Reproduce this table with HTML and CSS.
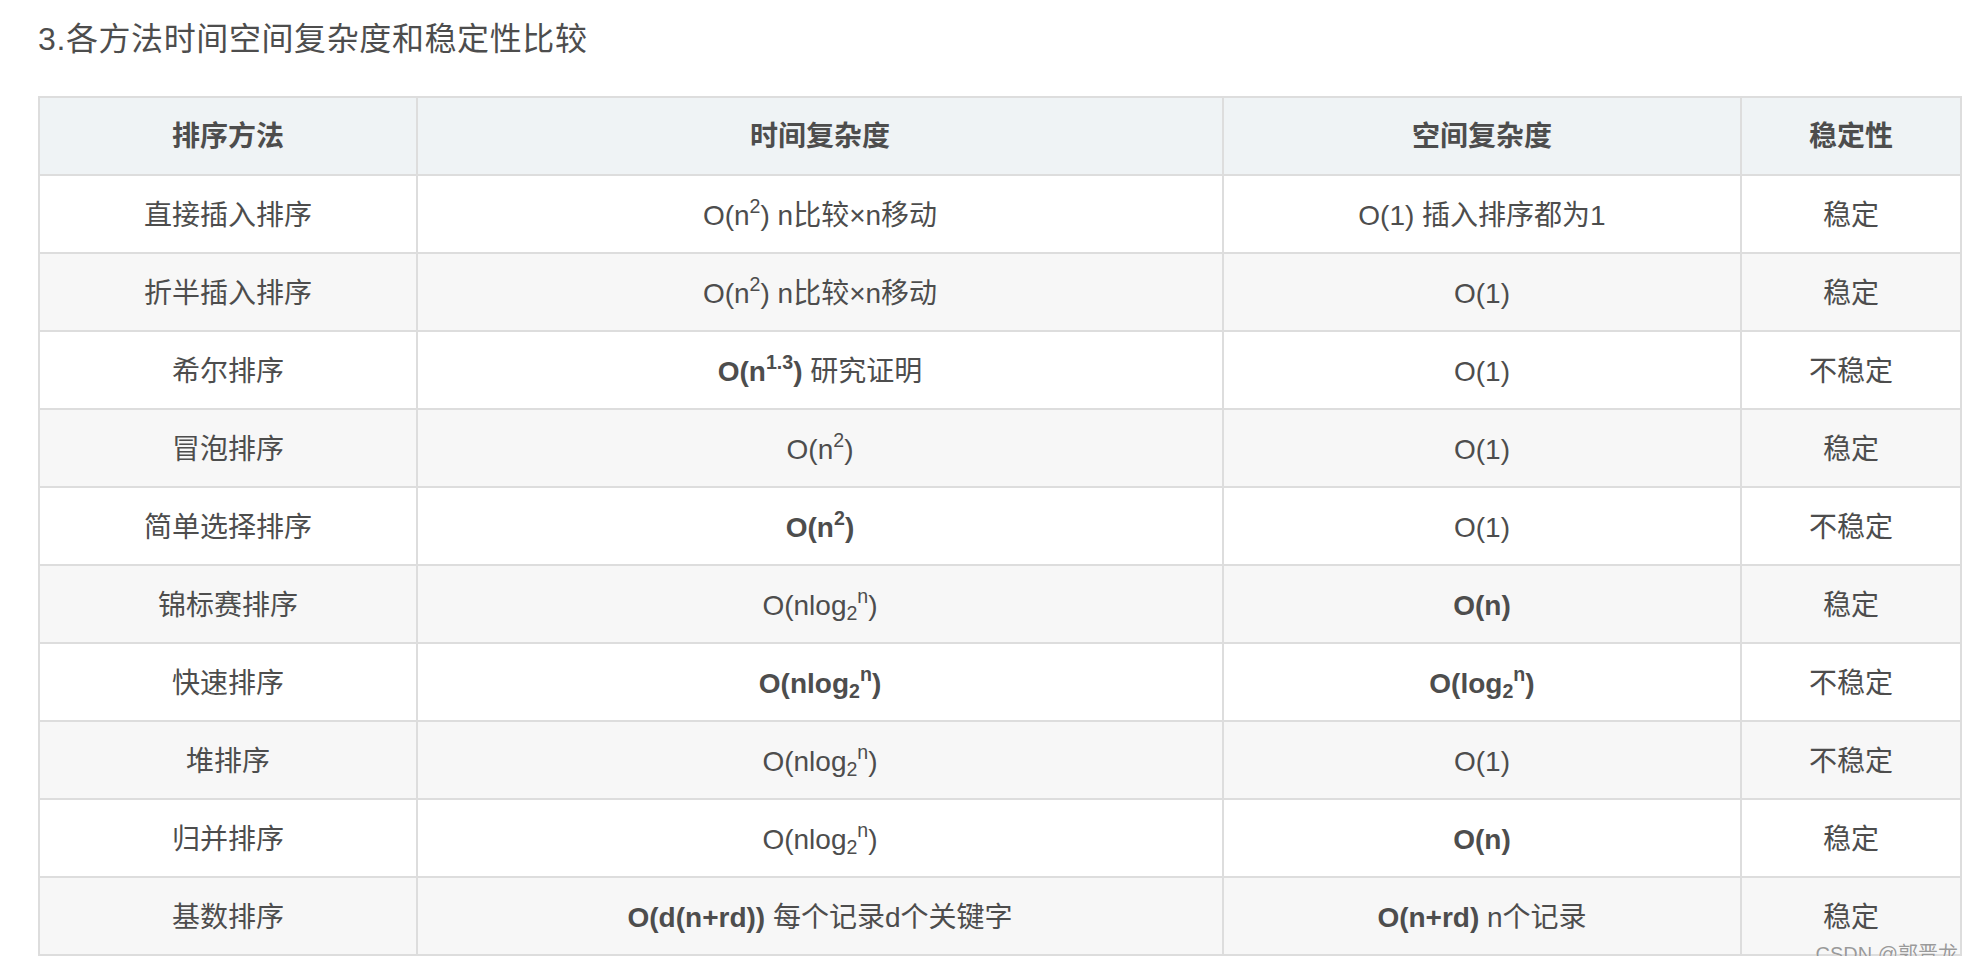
FILE: index.html
```html
<!DOCTYPE html>
<html lang="zh-CN">
<head>
<meta charset="utf-8">
<title>各方法时间空间复杂度和稳定性比较</title>
<link rel="stylesheet" href="styles.css">
</head>
<body>
<main class="article">
  <h3 class="section-title">3.各方法时间空间复杂度和稳定性比较</h3>
  <div class="table-wrap">
    <table class="cmp-table">
      <colgroup>
        <col class="col-method">
        <col class="col-time">
        <col class="col-space">
        <col class="col-stable">
      </colgroup>
      <thead>
        <tr><th>排序方法</th><th>时间复杂度</th><th>空间复杂度</th><th>稳定性</th></tr>
      </thead>
      <tbody>
        <tr><td>直接插入排序</td><td>O(n<sup>2</sup>) n比较×n移动</td><td>O(1) 插入排序都为1</td><td>稳定</td></tr>
        <tr><td>折半插入排序</td><td>O(n<sup>2</sup>) n比较×n移动</td><td>O(1)</td><td>稳定</td></tr>
        <tr><td>希尔排序</td><td><strong>O(n<sup>1.3</sup>)</strong> 研究证明</td><td>O(1)</td><td>不稳定</td></tr>
        <tr><td>冒泡排序</td><td>O(n<sup>2</sup>)</td><td>O(1)</td><td>稳定</td></tr>
        <tr><td>简单选择排序</td><td><strong>O(n<sup>2</sup>)</strong></td><td>O(1)</td><td>不稳定</td></tr>
        <tr><td>锦标赛排序</td><td>O(nlog<sub>2</sub><sup>n</sup>)</td><td><strong>O(n)</strong></td><td>稳定</td></tr>
        <tr><td>快速排序</td><td><strong>O(nlog<sub>2</sub><sup>n</sup>)</strong></td><td><strong>O(log<sub>2</sub><sup>n</sup>)</strong></td><td>不稳定</td></tr>
        <tr><td>堆排序</td><td>O(nlog<sub>2</sub><sup>n</sup>)</td><td>O(1)</td><td>不稳定</td></tr>
        <tr><td>归并排序</td><td>O(nlog<sub>2</sub><sup>n</sup>)</td><td><strong>O(n)</strong></td><td>稳定</td></tr>
        <tr><td>基数排序</td><td><strong>O(d(n+rd))</strong> 每个记录d个关键字</td><td><strong>O(n+rd)</strong> n个记录</td><td>稳定</td></tr>
      </tbody>
    </table>
    <span class="watermark">CSDN @郭晋龙</span>
  </div>
</main>
</body>
</html>
```

FILE: styles.css
```css
html, body {
  margin: 0;
  padding: 0;
  background: #ffffff;
}

body {
  font-family: "Liberation Sans", "Noto Sans CJK SC", sans-serif;
  color: #4d4d4d;
}

.article {
  padding: 17px 0 0 38px;
}

.section-title {
  margin: 0 0 35px 0;
  font-size: 32px;
  line-height: 44px;
  letter-spacing: 0.6px;
  font-weight: normal;
  color: #4d4d4d;
}

.table-wrap {
  position: relative;
  width: 1924px;
}

.cmp-table {
  border-collapse: collapse;
  table-layout: fixed;
  width: 1924px;
  font-size: 28px;
}

.col-method { width: 378px; }
.col-time { width: 806px; }
.col-space { width: 518px; }
.col-stable { width: 220px; }

.cmp-table th,
.cmp-table td {
  border: 2px solid #dddddd;
  padding: 18px 16px 14px;
  line-height: 44px;
  text-align: center;
  white-space: nowrap;
}

.cmp-table th {
  background: #eff3f5;
  font-weight: bold;
  padding-top: 17px;
  padding-bottom: 15px;
}

.cmp-table tbody tr:nth-child(even) td {
  background: #f7f7f7;
}

.cmp-table strong {
  font-weight: bold;
}

.cmp-table sup,
.cmp-table sub {
  font-size: 0.7em;
  line-height: 0;
}

.cmp-table sup {
  vertical-align: 0.6em;
}

.cmp-table sub {
  vertical-align: -0.25em;
}

.watermark {
  position: absolute;
  right: 4px;
  bottom: -10px;
  font-size: 20px;
  line-height: 24px;
  color: #9a9a9a;
  text-shadow: 0 0 1px #ffffff;
  white-space: nowrap;
}
```
